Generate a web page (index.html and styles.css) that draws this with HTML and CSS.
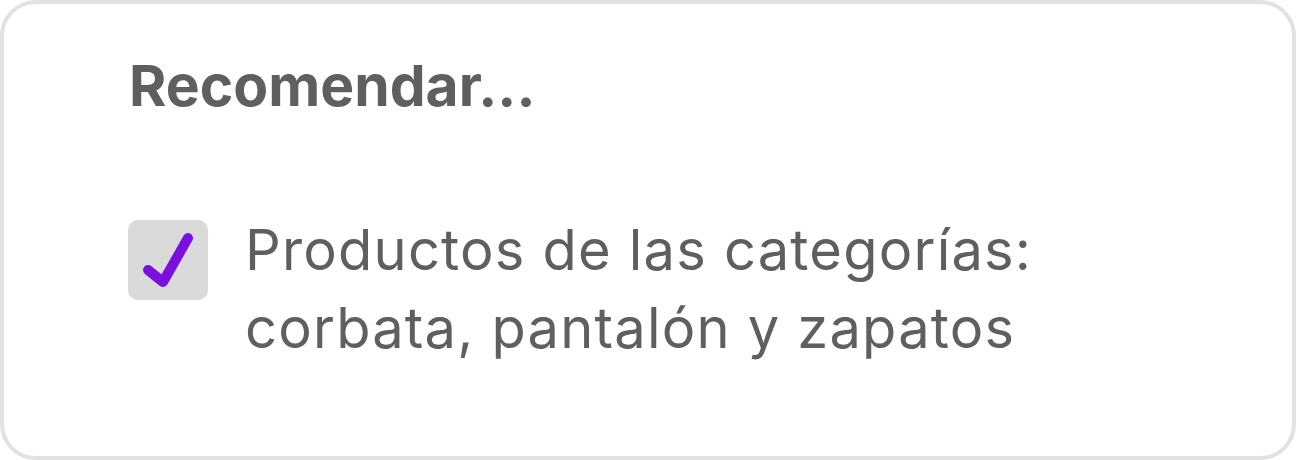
FILE: index.html
```html
<!DOCTYPE html>
<html lang="es">
<head>
<meta charset="utf-8">
<link rel="stylesheet" href="styles.css">
</head>
<body>
<div class="card">
  <h2 class="title">Recomendar...</h2>
  <div class="option">
    <div class="checkbox">
      <svg width="80" height="80" viewBox="0 0 80 80"><path d="M20 50 L35 62 L60 18" fill="none" stroke="#7a10dd" stroke-width="10" stroke-linecap="round" stroke-linejoin="round"/></svg>
    </div>
    <p class="label">Productos de las categorías:<br>corbata, pantalón y zapatos</p>
  </div>
</div>
</body>
</html>
```
FILE: styles.css
```css
html, body { margin: 0; padding: 0; background: #fff; }
body { width: 1296px; height: 460px; font-family: Inter, "Liberation Sans", sans-serif; color: #5f5f5f; }
.card {
  box-sizing: border-box;
  width: 1296px; height: 460px;
  border: 4px solid #e2e2e2;
  border-radius: 36px;
  padding: 47px 0 0 124px;
}
.title { margin: 0 0 0 1px; font-size: 57px; font-weight: 700; line-height: 70px; letter-spacing: 0; }
.option { display: flex; gap: 37px; margin-top: 99px; align-items: flex-start; }
.checkbox { width: 80px; height: 80px; border-radius: 10px; background: #dadada; flex: none; }
.checkbox svg { display: block; }
.label { margin: -9px 0 0; font-size: 56px; line-height: 78px; font-weight: 400; letter-spacing: 1.2px; }
```
